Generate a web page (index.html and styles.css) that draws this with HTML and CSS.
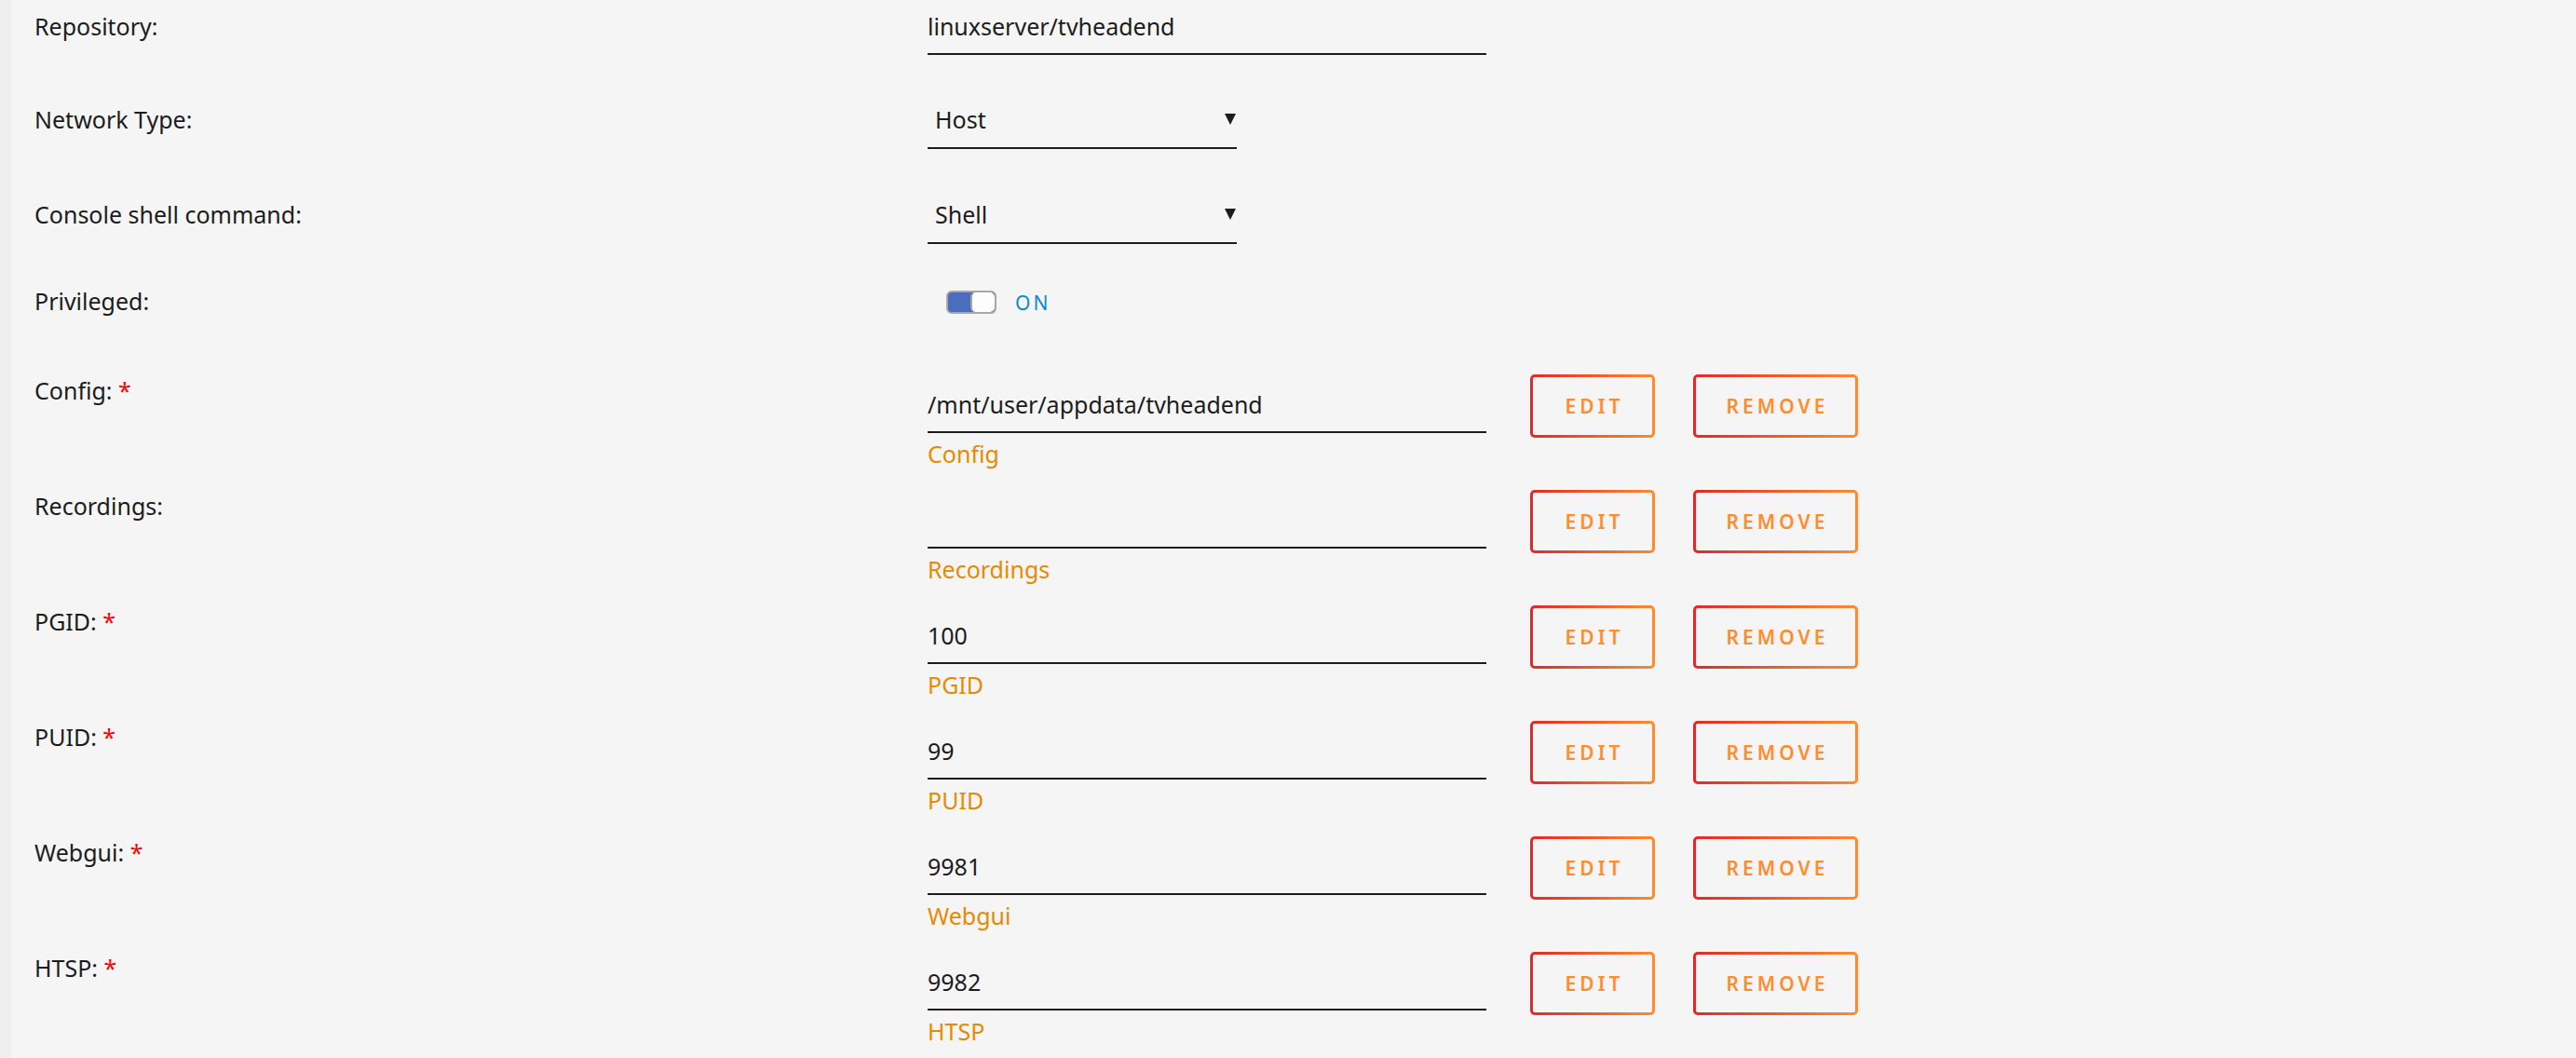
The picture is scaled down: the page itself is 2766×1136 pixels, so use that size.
FILE: index.html
```html
<!DOCTYPE html>
<html lang="en">
<head>
    <meta charset="UTF-8">
    <title>Edit Container</title>
    <link rel="stylesheet" href="styles.css">
</head>
<body>
    <div class="page">
        <div class="form">
            <div class="row row-text">
                <div class="label">Repository:</div>
                <div class="field"><input class="text" type="text" value="linuxserver/tvheadend"></div>
            </div>

            <div class="row row-select">
                <div class="label">Network Type:</div>
                <div class="field">
                    <div class="select">
                        <select><option>Host</option><option>Bridge</option><option>None</option></select>
                    </div>
                </div>
            </div>

            <div class="row row-select row-last-select">
                <div class="label">Console shell command:</div>
                <div class="field">
                    <div class="select">
                        <select><option>Shell</option><option>Bash</option></select>
                    </div>
                </div>
            </div>

            <div class="row row-switch">
                <div class="label">Privileged:</div>
                <div class="field switch-field">
                    <div class="switch"><span class="knob"></span></div>
                    <span class="switch-text">ON</span>
                </div>
            </div>

            <div class="row row-path">
                <div class="label">Config: <span class="req">*</span></div>
                <div class="field">
                    <input class="text" type="text" value="/mnt/user/appdata/tvheadend">
                    <div class="hint">Config</div>
                </div>
                <div class="actions">
                    <button class="btn btn-edit">Edit</button>
                    <button class="btn btn-remove">Remove</button>
                </div>
            </div>

            <div class="row row-path">
                <div class="label">Recordings:</div>
                <div class="field">
                    <input class="text" type="text" value="">
                    <div class="hint">Recordings</div>
                </div>
                <div class="actions">
                    <button class="btn btn-edit">Edit</button>
                    <button class="btn btn-remove">Remove</button>
                </div>
            </div>

            <div class="row row-path">
                <div class="label">PGID: <span class="req">*</span></div>
                <div class="field">
                    <input class="text" type="text" value="100">
                    <div class="hint">PGID</div>
                </div>
                <div class="actions">
                    <button class="btn btn-edit">Edit</button>
                    <button class="btn btn-remove">Remove</button>
                </div>
            </div>

            <div class="row row-path">
                <div class="label">PUID: <span class="req">*</span></div>
                <div class="field">
                    <input class="text" type="text" value="99">
                    <div class="hint">PUID</div>
                </div>
                <div class="actions">
                    <button class="btn btn-edit">Edit</button>
                    <button class="btn btn-remove">Remove</button>
                </div>
            </div>

            <div class="row row-path">
                <div class="label">Webgui: <span class="req">*</span></div>
                <div class="field">
                    <input class="text" type="text" value="9981">
                    <div class="hint">Webgui</div>
                </div>
                <div class="actions">
                    <button class="btn btn-edit">Edit</button>
                    <button class="btn btn-remove">Remove</button>
                </div>
            </div>

            <div class="row row-path">
                <div class="label">HTSP: <span class="req">*</span></div>
                <div class="field">
                    <input class="text" type="text" value="9982">
                    <div class="hint">HTSP</div>
                </div>
                <div class="actions">
                    <button class="btn btn-edit">Edit</button>
                    <button class="btn btn-remove">Remove</button>
                </div>
            </div>
        </div>
    </div>
</body>
</html>
```

FILE: styles.css
```css
html, body {
    margin: 0;
    height: 100%;
}

body {
    font-family: "Noto Sans", "Open Sans", Arial, sans-serif;
    font-size: 25px;
    color: #1c1c1c;
    background-color: #efefef;
    overflow: hidden;
}

.page {
    margin-left: 12px;
    min-height: 100%;
    background-color: #f5f5f5;
}

.form {
    padding: 11px 0 0 25px;
}

.row {
    display: flex;
    align-items: flex-start;
}

.label {
    width: 959px;
    flex: none;
    line-height: 34px;
}

.req {
    color: #f00;
}

.field {
    flex: none;
}

/* text inputs */
.text {
    display: block;
    width: 600px;
    height: 34px;
    padding: 0 0 12px;
    margin: 0;
    border: 0;
    border-bottom: 2px solid #1c1c1c;
    background: transparent;
    font-family: inherit;
    font-size: 25px;
    color: #1c1c1c;
    outline: none;
}

.row-text {
    margin-bottom: 52px;
}

/* dropdowns */
.select {
    display: flex;
    align-items: center;
    width: 332px;
    padding-bottom: 13px;
    border-bottom: 2px solid #1c1c1c;
}

.select select {
    flex: 1;
    height: 34px;
    padding: 0 8px;
    margin: 0;
    border: 0;
    background: transparent;
    appearance: none;
    -webkit-appearance: none;
    font-family: inherit;
    font-size: 25px;
    color: #1c1c1c;
    outline: none;
}

.select::after {
    content: "";
    width: 0;
    height: 0;
    margin-right: 1px;
    border-left: 6px solid transparent;
    border-right: 6px solid transparent;
    border-top: 12px solid #1c1c1c;
}

.row-select {
    margin-bottom: 53px;
}

.row-last-select {
    margin-bottom: 44px;
}

/* switch */
.switch-field {
    display: flex;
    align-items: center;
    height: 34px;
}

.switch {
    display: flex;
    justify-content: flex-end;
    width: 50px;
    height: 21px;
    margin: 3px 0 0 20px;
    border: 2px solid #a8a8a8;
    border-radius: 6px;
    background-color: #4a6ebd;
}

.knob {
    width: 24px;
    height: 21px;
    border-left: 2px solid #a8a8a8;
    border-radius: 5px;
    background-color: #fdfdfd;
}

.switch-text {
    margin: 3px 0 0 20px;
    font-size: 21px;
    letter-spacing: 3px;
    color: #0b8ad2;
}

.row-switch {
    margin-bottom: 62px;
}

/* path / port rows */
.row-path {
    margin-bottom: 22px;
}

.row-path .field {
    margin-top: 15px;
}

.hint {
    margin-top: 5px;
    line-height: 34px;
    color: #e88a00;
}

.actions {
    display: flex;
    gap: 41px;
    margin-left: 47px;
}

.btn {
    height: 68px;
    padding: 0;
    border: 3px solid transparent;
    border-radius: 5px;
    background:
        linear-gradient(#f5f5f5, #f5f5f5) padding-box,
        linear-gradient(90deg, #e22828, #ff8c2f) border-box;
    font-family: inherit;
    font-size: 21px;
    font-weight: 600;
    letter-spacing: 4px;
    text-transform: uppercase;
    color: #ff8c2f;
    cursor: pointer;
}

.btn-edit {
    width: 134px;
    padding-left: 4px;
}

.btn-remove {
    width: 177px;
    padding-left: 4px;
}
```
